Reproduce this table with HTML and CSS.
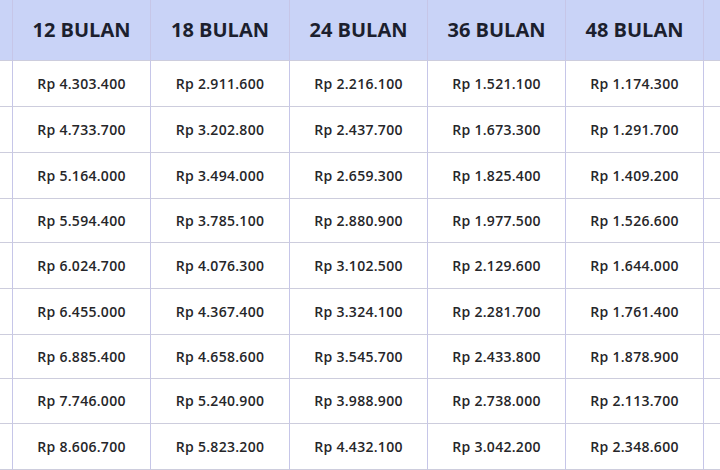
FILE: index.html
```html
<!DOCTYPE html>
<html>
<head>
<meta charset="utf-8">
<link rel="stylesheet" href="styles.css">
</head>
<body>
<div class="grid">
  <div class="h"></div><div class="h">12 BULAN</div><div class="h">18 BULAN</div><div class="h">24 BULAN</div><div class="h">36 BULAN</div><div class="h">48 BULAN</div><div class="h last"></div>

  <div class="c"></div><div class="c">Rp 4.303.400</div><div class="c">Rp 2.911.600</div><div class="c">Rp 2.216.100</div><div class="c">Rp 1.521.100</div><div class="c">Rp 1.174.300</div><div class="c last"></div>
  <div class="c"></div><div class="c">Rp 4.733.700</div><div class="c">Rp 3.202.800</div><div class="c">Rp 2.437.700</div><div class="c">Rp 1.673.300</div><div class="c">Rp 1.291.700</div><div class="c last"></div>
  <div class="c"></div><div class="c">Rp 5.164.000</div><div class="c">Rp 3.494.000</div><div class="c">Rp 2.659.300</div><div class="c">Rp 1.825.400</div><div class="c">Rp 1.409.200</div><div class="c last"></div>
  <div class="c"></div><div class="c">Rp 5.594.400</div><div class="c">Rp 3.785.100</div><div class="c">Rp 2.880.900</div><div class="c">Rp 1.977.500</div><div class="c">Rp 1.526.600</div><div class="c last"></div>
  <div class="c"></div><div class="c">Rp 6.024.700</div><div class="c">Rp 4.076.300</div><div class="c">Rp 3.102.500</div><div class="c">Rp 2.129.600</div><div class="c">Rp 1.644.000</div><div class="c last"></div>
  <div class="c"></div><div class="c">Rp 6.455.000</div><div class="c">Rp 4.367.400</div><div class="c">Rp 3.324.100</div><div class="c">Rp 2.281.700</div><div class="c">Rp 1.761.400</div><div class="c last"></div>
  <div class="c"></div><div class="c">Rp 6.885.400</div><div class="c">Rp 4.658.600</div><div class="c">Rp 3.545.700</div><div class="c">Rp 2.433.800</div><div class="c">Rp 1.878.900</div><div class="c last"></div>
  <div class="c"></div><div class="c">Rp 7.746.000</div><div class="c">Rp 5.240.900</div><div class="c">Rp 3.988.900</div><div class="c">Rp 2.738.000</div><div class="c">Rp 2.113.700</div><div class="c last"></div>
  <div class="c"></div><div class="c">Rp 8.606.700</div><div class="c">Rp 5.823.200</div><div class="c">Rp 4.432.100</div><div class="c">Rp 3.042.200</div><div class="c">Rp 2.348.600</div><div class="c last"></div>
</div>
</body>
</html>
```

FILE: styles.css
```css
html, body {
  margin: 0;
  padding: 0;
  background: #ffffff;
}
.grid {
  width: 720px;
  height: 470px;
  overflow: hidden;
  display: grid;
  grid-template-columns: 13px 138px 139px 138px 138px 138px 1fr;
  grid-template-rows: 61px 46px 46px 46px 44px 46px 46px 44px 45px 1fr;
}
.h, .c {
  box-sizing: border-box;
  display: flex;
  align-items: center;
  justify-content: center;
  border-right: 1px solid #c6c6e8;
  border-bottom: 1px solid #cdcddd;
  white-space: nowrap;
}
.h {
  background: #c9d3f7;
  color: #1c1f2e;
  font-family: "Open Sans", sans-serif;
  font-weight: 700;
  font-size: 20px;
  padding-bottom: 2px;
}
.c {
  background: #ffffff;
  color: #262629;
  font-family: "Open Sans", sans-serif;
  font-weight: 600;
  font-size: 14px;
  letter-spacing: 0.3px;
  padding-bottom: 1px;
}
.last {
  border-right: none;
}
```
